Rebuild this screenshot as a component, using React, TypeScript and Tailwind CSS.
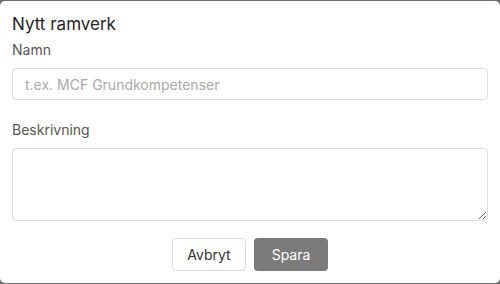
export default function App() {
  return (
    <div className="w-[500px] h-[284px] bg-[#6f6f6f] py-px overflow-hidden" style={{ fontFamily: "Inter, 'Open Sans', sans-serif" }}>
      <div className="h-full bg-white rounded-[5px] px-3 pt-[12px]">
        <h2 className="text-[17px] leading-[22px] text-[#1f1f1f]">Nytt ramverk</h2>
        <label className="block mt-[5px] text-[14px] leading-[20px] text-[#555]">Namn</label>
        <input
          className="mt-[8px] w-full h-[32px] border border-[#dcdde2] rounded-[4px] px-3 text-[14px] text-[#333] placeholder:text-[#a9a9ad] outline-none"
          placeholder="t.ex. MCF Grundkompetenser"
        />
        <label className="block mt-[20px] text-[14px] leading-[20px] text-[#555]">Beskrivning</label>
        <textarea className="mt-[8px] block w-full h-[73px] border border-[#dcdde2] rounded-[4px] px-3 py-2 text-[14px] outline-none" />
        <div className="flex justify-center gap-2 mt-[17px]">
          <button className="w-[74px] h-[33px] border border-[#dcdde2] rounded-[4px] bg-white text-[14px] text-[#333]">Avbryt</button>
          <button className="w-[74px] h-[33px] rounded-[4px] bg-[#7b7b7b] text-[14px] text-white">Spara</button>
        </div>
      </div>
    </div>
  );
}
